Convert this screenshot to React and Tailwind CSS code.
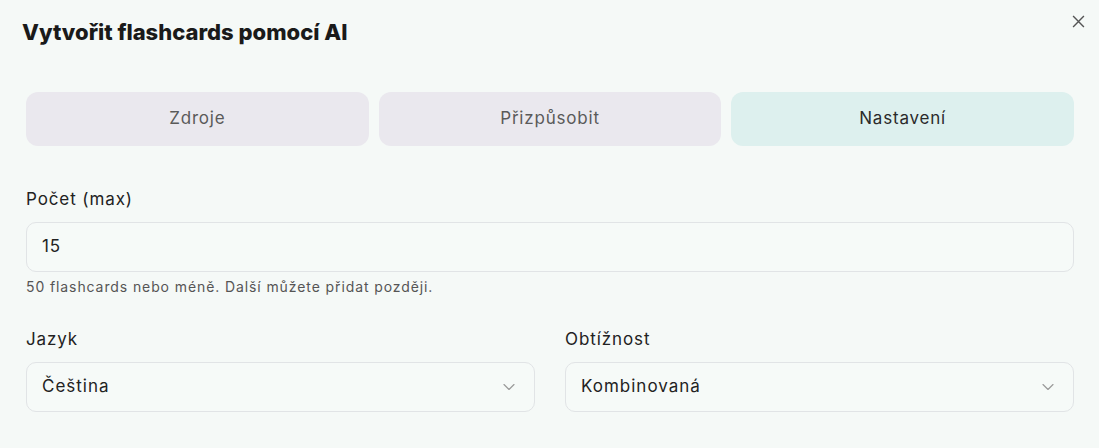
import { ChevronDown } from 'lucide-react'

const font = { fontFamily: 'Inter, "Noto Sans", sans-serif' }

function Tab({ label, active }) {
  return (
    <div
      className={`flex h-[54px] items-center justify-center rounded-xl text-[17px] tracking-[0.8px] ${
        active ? 'bg-[#ddf0ee] text-[#2a2a2a]' : 'bg-[#eae8ee] text-[#5a5a5a]'
      }`}
    >
      {label}
    </div>
  )
}

function Select({ label, value }) {
  return (
    <div className="flex flex-col">
      <div className="mb-[11px] text-[17px] leading-[24px] tracking-[0.9px] text-[#222]">{label}</div>
      <div className="flex h-[50px] items-center justify-between rounded-[10px] border border-[#e1e4e6] bg-[#f6faf8] pl-[15px] pr-[15px]">
        <span className="text-[17px] tracking-[1px] text-[#222]">{value}</span>
        <ChevronDown size={20} strokeWidth={1.4} className="text-[#9a9a9a]" />
      </div>
    </div>
  )
}

export default function App() {
  return (
    <div className="h-[448px] w-full bg-[#f5f9f7] pl-[26px] pr-[25px] pt-[17px]" style={font}>
      <div className="flex items-start justify-between">
        <h1 className="-ml-[4px] text-[22px] font-extrabold leading-[30px] text-[#1a1a1a]">
          Vytvořit flashcards pomocí AI
        </h1>
        <button className="-mr-[15px] -mt-[6px] p-1 text-[#555]">
          <svg width="13" height="13" viewBox="0 0 12 12" fill="none" stroke="currentColor" strokeWidth="1.3">
            <path d="M1 1l10 10M11 1L1 11" />
          </svg>
        </button>
      </div>

      <div className="mt-[45px] grid grid-cols-3 gap-[10px]">
        <Tab label="Zdroje" />
        <Tab label="Přizpůsobit" />
        <Tab label="Nastavení" active />
      </div>

      <div className="mt-[41px] flex flex-col">
        <div className="mb-[11px] text-[17px] leading-[24px] tracking-[0.9px] text-[#222]">Počet (max)</div>
        <div className="flex h-[50px] items-center rounded-[10px] border border-[#e1e4e6] bg-[#f6faf8] px-[15px]">
          <span className="text-[17px] tracking-[0.9px] text-[#222]">15</span>
        </div>
        <div className="mt-[5px] text-[14px] leading-[20px] tracking-[0.9px] text-[#555]">
          50 flashcards nebo méně. Další můžete přidat později.
        </div>
      </div>

      <div className="mt-[30px] grid grid-cols-2 gap-[30px]">
        <Select label="Jazyk" value="Čeština" />
        <Select label="Obtížnost" value="Kombinovaná" />
      </div>
    </div>
  )
}
